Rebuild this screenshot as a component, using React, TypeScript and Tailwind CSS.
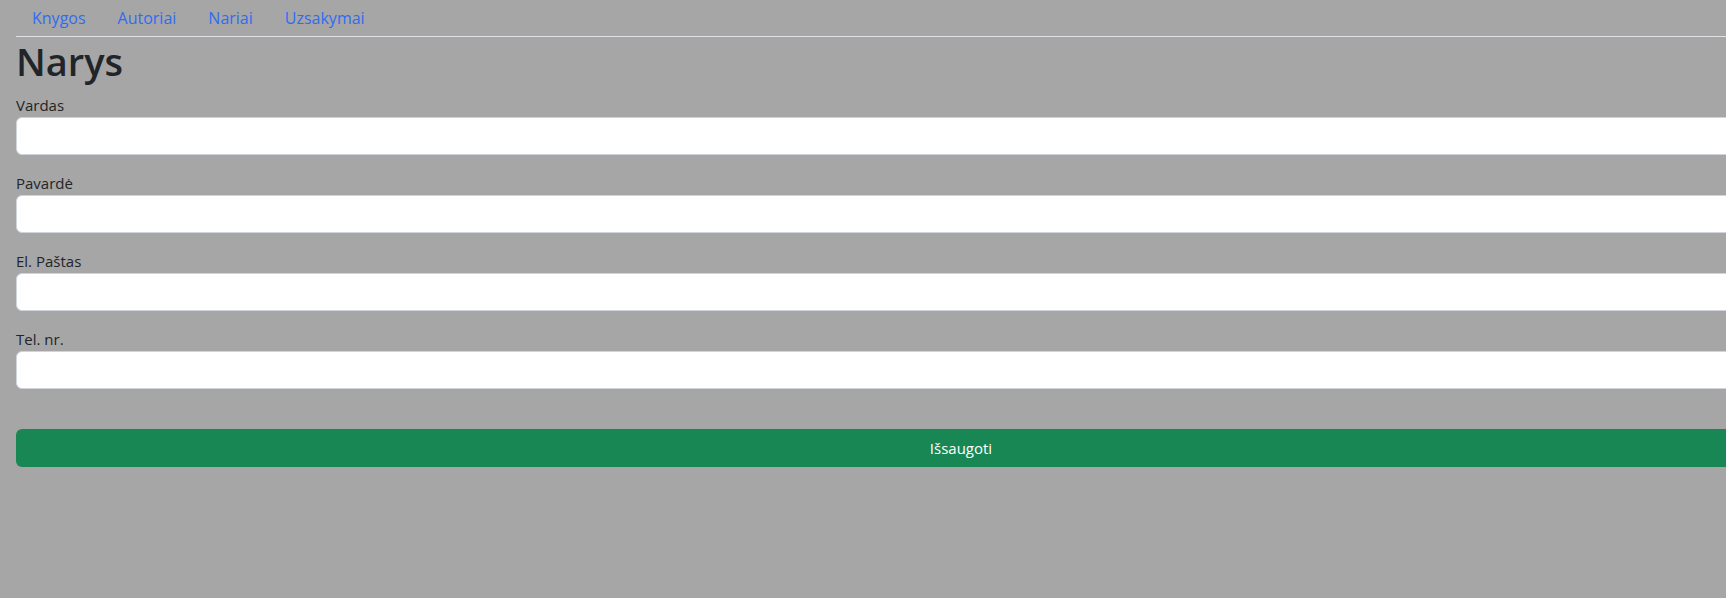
import React from "react";

const font = { fontFamily: '"Open Sans", "Noto Sans", "Liberation Sans", sans-serif' };

function Field({ label }: { label: string }) {
  return (
    <div className="mb-4 flex flex-col">
      <label className="text-[15px] leading-6 text-[#212529]">{label}</label>
      <input
        type="text"
        className="h-[38px] w-full rounded-[6px] border border-[#ced4da] bg-white px-3 text-[15px] outline-none"
      />
    </div>
  );
}

export default function App() {
  return (
    <div
      className="h-[598px] w-screen overflow-hidden bg-[#a6a6a6] text-[#212529]"
      style={font}
    >
      <div className="ml-4 w-[1890px]">
        <nav className="flex border-b border-[#dee2e6]">
          <a className="px-4 text-[16px] leading-[36px] text-[#2f6cf3]">Knygos</a>
          <a className="px-4 text-[16px] leading-[36px] text-[#2f6cf3]">Autoriai</a>
          <a className="px-4 text-[16px] leading-[36px] text-[#2f6cf3]">Nariai</a>
          <a className="px-4 text-[16px] leading-[36px] text-[#2f6cf3]">Uzsakymai</a>
        </nav>
        <h1 className="mb-2 text-[38px] font-semibold leading-[48px] text-[#212529]">Narys</h1>
        <form>
          <Field label="Vardas" />
          <Field label="Pavardė" />
          <Field label="El. Paštas" />
          <Field label="Tel. nr." />
          <div className="h-6" />
          <button
            type="button"
            className="h-[38px] w-full rounded-[6px] bg-[#198754] text-[15px] text-white"
          >
            Išsaugoti
          </button>
        </form>
      </div>
    </div>
  );
}
